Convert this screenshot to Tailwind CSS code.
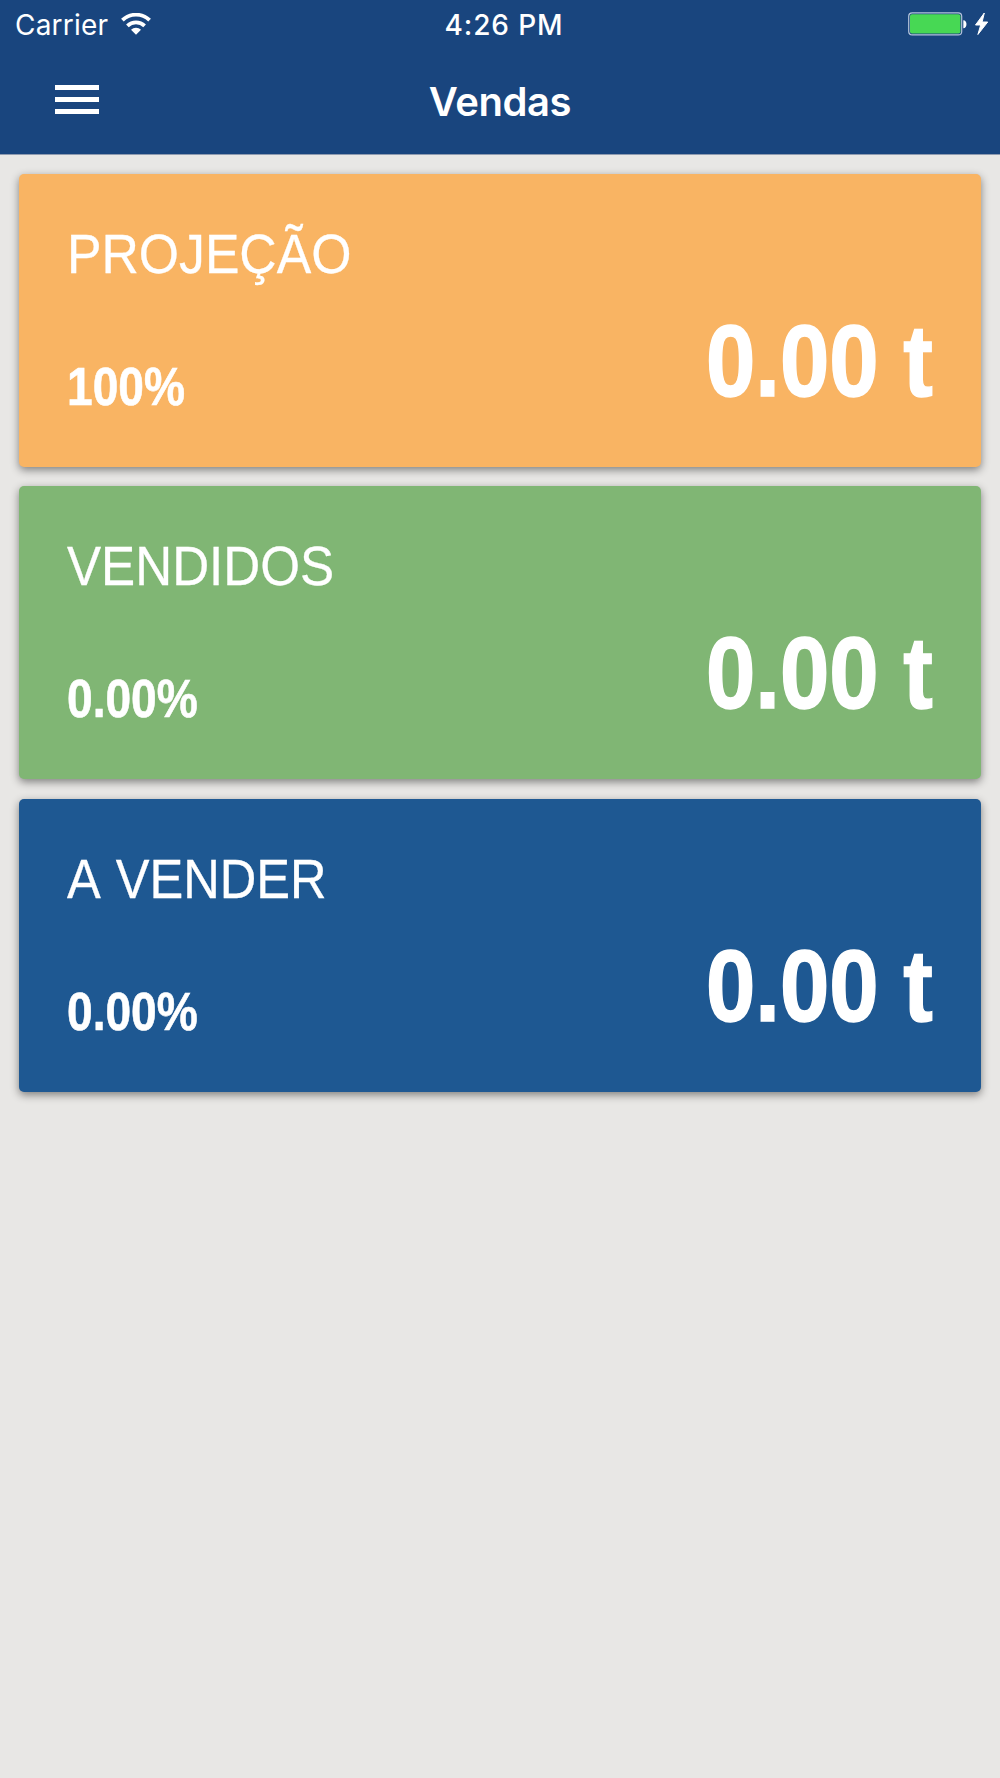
<!DOCTYPE html>
<html lang="pt-BR">
<head>
  <meta charset="UTF-8">
  <title>Vendas</title>
  <script src="https://cdn.jsdelivr.net/npm/@tailwindcss/browser@4"></script>
</head>
<body class="bg-[#e8e7e5] min-h-screen text-white font-['Liberation_Sans',Arial,sans-serif]">
  <header class="h-[155px] bg-[#19457e] border-b border-[#8f9bb0] font-['Inter',sans-serif]">
    <!-- status bar -->
    <div class="grid grid-cols-3 items-center h-[50px] pl-[15px] pr-[11px]">
      <div class="flex items-center gap-[13px]">
        <span class="text-[28px] leading-[50px] tracking-[0.2px]">Carrier</span>
        <svg class="w-[30px] h-[22px] -mt-[3px]" viewBox="0 0 30 22" fill="none" stroke="#fff" stroke-width="3.8">
          <path d="M1.400 7.200a19.500 19.500 0 0 1 27.200 0"/>
          <path d="M6.400 12.800a12.400 12.400 0 0 1 17.200 0"/>
          <path d="M15 21.800l-5-5a7.200 7.200 0 0 1 10 0z" fill="#fff" stroke="none"/>
        </svg>
      </div>
      <span class="text-[28px] leading-[50px] pl-1 font-medium tracking-[0.9px] text-center whitespace-nowrap">4:26 PM</span>
      <svg class="w-[81px] h-[24px] justify-self-end -mt-[2px]" viewBox="0 0 81 24">
        <rect x="0.7" y="0.9" width="53" height="22" rx="3.5" fill="#19457e" stroke="#b4c3da" stroke-width="1.2"/>
        <rect x="2" y="2.2" width="50.4" height="19.4" rx="2" fill="#47d854"/>
        <path d="M55.300 8.200c4.200 0 4.200 8 0 8z" fill="#fff"/>
        <path d="M76.300 1L67.500 13h5.200L69.900 22.500 79.700 10h-5.600z" fill="#fff" stroke="#fff" stroke-width="1"/>
      </svg>
    </div>
    <!-- nav -->
    <div class="grid grid-cols-3 items-center h-[103px] px-[55px]">
      <button class="flex flex-col gap-[7px] w-[44px] -mt-[5px]">
        <span class="h-[5px] w-full bg-white"></span>
        <span class="h-[5px] w-full bg-white"></span>
        <span class="h-[5px] w-full bg-white"></span>
      </button>
      <h1 class="text-[40px] leading-[100px] font-semibold tracking-[-0.4px] text-center">Vendas</h1>
    </div>
  </header>

  <main class="flex flex-col gap-[19.300px] px-[19px] pt-[19px]">
    <section class="h-[293px] rounded-[5px] bg-[#f9b463] px-12 pt-[50px] shadow-[0_3px_8px_rgba(0,0,0,0.45)]">
      <h2 class="text-[55px] leading-[60px] origin-left scale-x-94 [-webkit-text-stroke:0.3px_white]">PROJEÇÃO</h2>
      <div class="flex justify-between items-start font-bold mt-[25px]">
        <span class="text-[53px] leading-[60px] pt-[48px] origin-left scale-x-87 [-webkit-text-stroke:0.6px_white]">100%</span>
        <span class="text-[102px] leading-[104px] origin-right scale-x-87 [-webkit-text-stroke:1.5px_white]">0.00 t</span>
      </div>
    </section>

    <section class="h-[293px] rounded-[5px] bg-[#80b674] px-12 pt-[50px] shadow-[0_3px_8px_rgba(0,0,0,0.45)]">
      <h2 class="text-[55px] leading-[60px] origin-left scale-x-93 [-webkit-text-stroke:0.3px_white]">VENDIDOS</h2>
      <div class="flex justify-between items-start font-bold mt-[25px]">
        <span class="text-[53px] leading-[60px] pt-[48px] origin-left scale-x-87 [-webkit-text-stroke:0.6px_white]">0.00%</span>
        <span class="text-[102px] leading-[104px] origin-right scale-x-87 [-webkit-text-stroke:1.5px_white]">0.00 t</span>
      </div>
    </section>

    <section class="h-[293px] rounded-[5px] bg-[#1e5892] px-12 pt-[50px] shadow-[0_3px_8px_rgba(0,0,0,0.45)]">
      <h2 class="text-[55px] leading-[60px] origin-left scale-x-92 [word-spacing:4px] [-webkit-text-stroke:0.3px_white]">A VENDER</h2>
      <div class="flex justify-between items-start font-bold mt-[25px]">
        <span class="text-[53px] leading-[60px] pt-[48px] origin-left scale-x-87 [-webkit-text-stroke:0.6px_white]">0.00%</span>
        <span class="text-[102px] leading-[104px] origin-right scale-x-87 [-webkit-text-stroke:1.5px_white]">0.00 t</span>
      </div>
    </section>
  </main>
</body>
</html>
